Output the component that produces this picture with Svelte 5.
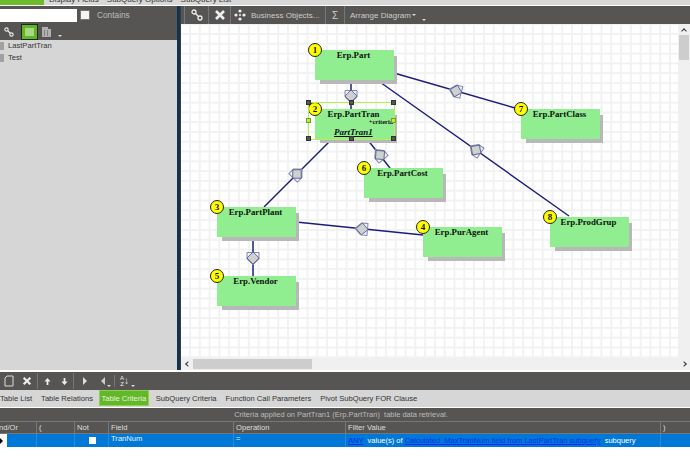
<script>
  const nodes = [
    { n: 1, name: "Erp.Part", x: 315, y: 50 },
    { n: 2, name: "Erp.PartTran", x: 315, y: 109 },
    { n: 3, name: "Erp.PartPlant", x: 217, y: 207 },
    { n: 4, name: "Erp.PurAgent", x: 423, y: 227 },
    { n: 5, name: "Erp.Vendor", x: 217, y: 276 },
    { n: 6, name: "Erp.PartCost", x: 364, y: 168 },
    { n: 7, name: "Erp.PartClass", x: 521, y: 109 },
    { n: 8, name: "Erp.ProdGrup", x: 550, y: 217 },
  ];

  // canvas starts at 181,24 so everything in here is offset from that
  const links = [
    { x1: 351, y1: 80, x2: 351, y2: 109, mx: 351, my: 96, rot: 0, thick: true },
    { x1: 394, y1: 73, x2: 515, y2: 108, mx: 456, my: 91, rot: 105 },
    { x1: 377, y1: 80, x2: 569, y2: 216, mx: 476, my: 150, rot: 125 },
    { x1: 333, y1: 138, x2: 264, y2: 207, mx: 297, my: 174, rot: 225 },
    { x1: 367, y1: 139, x2: 390, y2: 168, mx: 380, my: 155, rot: 140 },
    { x1: 296, y1: 222, x2: 423, y2: 235, mx: 362, my: 229, rot: 95 },
    { x1: 253, y1: 236, x2: 253, y2: 276, mx: 253, my: 258, rot: 0, thick: true },
  ];

  const handles = [
    { x: 308, y: 102, on: false },
    { x: 351, y: 102, on: false },
    { x: 393, y: 102, on: false },
    { x: 308, y: 120, on: true },
    { x: 393, y: 120, on: true },
    { x: 308, y: 138, on: false },
    { x: 351, y: 138, on: false },
    { x: 393, y: 138, on: false },
  ];

  const tabs = ["Table List", "Table Relations", "Table Criteria", "SubQuery Criteria", "Function Call Parameters", "Pivot SubQuery FOR Clause"];
</script>

<div class="app">
  <div class="menu">
    <div class="menu-green"></div>
    <div class="menu-text">
      <span>Display Fields</span><span>SubQuery Options</span><span>SubQuery List</span>
    </div>
  </div>

  <div class="main">
    <div class="left">
      <div class="search">
        <div class="input"></div>
        <div class="check"></div>
        <span>Contains</span>
      </div>
      <div class="left-tools">
        <svg class="ic link" viewBox="0 0 12 12"><circle cx="3" cy="3" r="2" /><circle cx="9" cy="9" r="2" /><path d="M4.5 4.5l3 3" /></svg>
        <div class="grid-btn"><div></div></div>
        <svg class="calc" viewBox="0 0 12 12"><path d="M1 1h6v2h3v8H1z" /><path class="dots" d="M3 5h1M6 5h1M3 7h1M6 7h1M3 9h1M6 9h1" /></svg>
        <span class="drop"></span>
      </div>
      <div class="list">
        <div class="item"><i></i>LastPartTran</div>
        <div class="item"><i></i>Test</div>
      </div>
    </div>

    <div class="sep"></div>

    <div class="right">
      <div class="tools">
        <div class="tool first"><svg class="ic link" viewBox="0 0 12 12"><circle cx="3" cy="3" r="2" /><circle cx="9" cy="9" r="2" /><path d="M4.5 4.5l3 3" /></svg></div>
        <div class="tool narrow"><svg class="ic x" viewBox="0 0 12 12"><path d="M2 2l8 8M10 2l-8 8" /></svg></div>
        <div class="tool bo">
          <svg class="ic move" viewBox="0 0 12 12"><circle cx="6" cy="2" r="1.6" /><circle cx="6" cy="10" r="1.6" /><circle cx="2" cy="6" r="1.6" /><circle cx="10" cy="6" r="1.6" /><circle cx="6" cy="6" r="1" /></svg>
          <span>Business Objects...</span>
        </div>
        <div class="tool sigma">Σ</div>
        <div class="tool plain">
          <span>Arrange Diagram</span><span class="drop small"></span><span class="drop"></span>
        </div>
      </div>

      <div class="canvas-wrap">
        <div class="canvas">
          <svg class="wires" width="690" height="461">
            {#each links as l}
              <line x1={l.x1} y1={l.y1} x2={l.x2} y2={l.y2} class:thick={l.thick} />
            {/each}
            {#each links as l}
              <g transform="translate({l.mx} {l.my}) rotate({l.rot})">
                <path class="cap" d="M-6 -5.5h12v6.5l-6 6l-6 -6z" />
                <path class="body" d="M0 -6l6 6l-6 6l-6 -6z" />
              </g>
            {/each}
          </svg>

          {#each nodes as node}
            <div class="node" style="left: {node.x - 181}px; top: {node.y - 24}px">
              <div class="node-name">{node.name}</div>
              {#if node.n === 2}
                <div class="crit">+criteria</div>
                <div class="alias">PartTran1</div>
              {/if}
              <div class="badge">{node.n}</div>
            </div>
          {/each}

          <div class="selection"></div>
          {#each handles as h}
            <div class="handle" class:on={h.on} style="left: {h.x - 181 - 2}px; top: {h.y - 24 - 2}px"></div>
          {/each}
        </div>
        <div class="vbar">
          <span class="arrow up"></span>
          <div class="vthumb"></div>
        </div>
        <div class="hbar">
          <span class="arrow lt"></span>
          <div class="hthumb"></div>
          <span class="arrow rt"></span>
        </div>
      </div>
    </div>
  </div>

  <div class="bottom">
    <div class="bottom-tools">
      <svg class="page" viewBox="0 0 10 12"><path d="M1 3l2 -2h6v10H1z" /></svg>
      <svg class="ic x" viewBox="0 0 12 12"><path d="M2 2l8 8M10 2l-8 8" /></svg>
      <i class="bar"></i>
      <svg class="mv" viewBox="0 0 8 8"><path d="M4 0l3.5 4H5v4H3V4H.5z" /></svg>
      <svg class="mv second" viewBox="0 0 8 8"><path d="M4 8l3.5 -4H5V0H3v4H.5z" /></svg>
      <i class="bar"></i>
      <span class="tri r"></span><span class="tri l"></span><span class="drop"></span>
      <i class="bar thin"></i>
      <span class="sort"><b>A<br />Z</b>↓</span><span class="drop"></span>
    </div>
    <div class="tabs">
      {#each tabs as t, i}
        <div class="tab" class:active={i === 2}>{t}</div>
      {/each}
    </div>
    <div class="caption">Criteria applied on PartTran1 (Erp.PartTran)&nbsp; table data retrieval.</div>
    <div class="head">
      <div class="c c1">And/Or</div>
      <div class="c c2">(</div>
      <div class="c c3">Not</div>
      <div class="c c4">Field</div>
      <div class="c c5">Operation</div>
      <div class="c c6">Filter Value</div>
      <div class="c c7">)</div>
    </div>
    <div class="row">
      <div class="c c1"><div class="sel"></div></div>
      <div class="c c2"></div>
      <div class="c c3"><div class="box"></div></div>
      <div class="c c4">TranNum</div>
      <div class="c c5">=</div>
      <div class="c c6 filter"><u>ANY</u>&nbsp; value(s) of <u>Calculated&nbsp; MaxTranNum field from LastPartTran subquery</u>&nbsp; subquery</div>
      <div class="c c7"></div>
    </div>
  </div>
</div>

<style>
  :global(body) {
    margin: 0;
    background: #fff;
  }

  .app {
    width: 690px;
    height: 461px;
    overflow: hidden;
    display: flex;
    flex-direction: column;
    font-family: "Liberation Sans", Arial, sans-serif;
    font-size: 8px;
    color: #ddd;
  }

  .menu {
    height: 5px;
    flex: none;
    display: flex;
    background: #d8d8d8;
    overflow: hidden;
    margin-bottom: 1px;
  }

  .menu-green {
    width: 44px;
    background: #6cbb2c;
  }

  .menu-text {
    display: flex;
    gap: 8px;
    margin-left: 5px;
    margin-top: -4px;
    color: #333;
    font-size: 8px;
    line-height: 8px;
    white-space: nowrap;
  }

  .main {
    height: 364px;
    flex: none;
    display: flex;
  }

  .left {
    width: 177px;
    display: flex;
    flex-direction: column;
  }

  .search {
    height: 18px;
    background: #565553;
    display: flex;
    align-items: center;
    color: #bbb;
    font-size: 8.3px;
  }

  .input {
    width: 77px;
    height: 13px;
    background: #fff;
  }

  .check {
    width: 8px;
    height: 8px;
    background: #f4f4f4;
    border: 1px solid #777;
    margin: 0 7px 0 3px;
  }

  .left-tools {
    height: 16px;
    background: #565553;
    display: flex;
    align-items: center;
    padding-left: 4px;
  }

  .left-tools .link {
    width: 10px;
    margin-right: 7px;
  }

  .grid-btn {
    width: 17px;
    height: 16px;
    box-sizing: border-box;
    border: 1px solid #222;
    background: #5fb71f;
    padding: 3px 3px;
    margin-right: 3px;
  }

  .grid-btn div {
    height: 100%;
    background: #a8d686;
  }

  .calc {
    width: 12px;
    height: 12px;
    fill: #b0b0b0;
    margin-right: 3px;
  }

  .calc .dots {
    stroke: #555;
    fill: none;
  }

  .drop {
    display: inline-block;
    width: 0;
    height: 0;
    border: 2px solid transparent;
    border-top: 2px solid #ddd;
    align-self: flex-end;
    margin: 0 0 1px 2px;
  }

  .list {
    flex: 1;
    background: #d6d6d6;
    color: #333;
    font-size: 7.6px;
  }

  .item {
    height: 12px;
    line-height: 12px;
    display: flex;
    align-items: center;
  }

  .item i {
    width: 4px;
    height: 8px;
    background: #a0a0a0;
    margin-right: 4px;
  }

  .sep {
    width: 4px;
    background: linear-gradient(90deg, #16324a 75%, #3a4f60);
  }

  .right {
    flex: 1;
    display: flex;
    flex-direction: column;
    min-width: 0;
  }

  .tools {
    height: 18px;
    flex: none;
    background: #565553;
    display: flex;
    align-items: stretch;
    color: #ccc;
    font-size: 8px;
    padding-left: 3px;
    white-space: nowrap;
  }

  .tool {
    display: flex;
    align-items: center;
    border-left: 1px solid #777;
  }

  .tool.first {
    width: 23px;
    justify-content: center;
  }

  .tool.narrow {
    width: 21px;
    justify-content: center;
  }

  .tool.bo {
    width: 95px;
    padding-left: 3px;
    box-sizing: border-box;
    gap: 5px;
  }

  .tool.sigma {
    width: 18px;
    justify-content: center;
    font-size: 10px;
  }

  .tool.plain {
    padding-left: 5px;
  }

  .tool.plain .small {
    margin-bottom: 6px;
    margin-left: 1px;
  }

  .tool.plain .drop:last-child {
    margin-left: 6px;
  }

  .ic {
    width: 12px;
    height: 12px;
    fill: none;
    stroke: #eee;
  }

  .ic.x {
    stroke-width: 2.6;
  }

  .ic.link {
    stroke-width: 1.3;
  }

  .ic.move {
    fill: #eee;
    stroke: none;
  }

  .canvas-wrap {
    flex: 1;
    display: grid;
    grid-template-columns: 497px 12px;
    grid-template-rows: 334px 12px;
    background: #f0f0f0;
  }

  .canvas {
    position: relative;
    overflow: hidden;
    background-color: #fff;
    background-image:
      linear-gradient(90deg, #f2f2f2 2px, transparent 2px),
      linear-gradient(#f2f2f2 2px, transparent 2px);
    background-size: 9.8px 9.8px;
    background-position: 8px 9px;
  }

  .wires {
    position: absolute;
    left: -181px;
    top: -24px;
  }

  .wires line {
    stroke: #1c1c7c;
    stroke-width: 1.4;
  }

  .wires line.thick {
    stroke: #4a5a9c;
    stroke-width: 2;
  }

  .cap {
    fill: #eef0f6;
    stroke: #8088b4;
    stroke-width: 1;
  }

  .body {
    fill: #d0d0d0;
    stroke: #4a5688;
    stroke-width: 0.8;
  }

  .node {
    position: absolute;
    width: 79px;
    height: 30px;
    background: #90ee90;
    box-shadow: 4px 5px 0 -1px #b8b8b8;
    color: #111;
    font-family: "Liberation Serif", "Times New Roman", serif;
  }

  .node-name {
    text-align: center;
    font-weight: bold;
    font-size: 8.8px;
    line-height: 10px;
    padding-right: 2px;
  }

  .crit {
    position: absolute;
    right: 1px;
    top: 9px;
    font-size: 6.5px;
    font-weight: bold;
    line-height: 8px;
  }

  .alias {
    position: absolute;
    left: 19px;
    top: 18px;
    font-size: 9px;
    font-weight: bold;
    font-style: italic;
    line-height: 10px;
    text-decoration: underline;
  }

  .badge {
    position: absolute;
    left: -7px;
    top: -7px;
    width: 14px;
    height: 14px;
    box-sizing: border-box;
    border: 1px solid #222;
    border-radius: 50%;
    background: #ff0;
    text-align: center;
    font-size: 9px;
    font-weight: bold;
    line-height: 12px;
  }

  .selection {
    position: absolute;
    left: 127px;
    top: 78px;
    width: 85px;
    height: 36px;
    border: 1px solid #b8ef50;
  }

  .handle {
    position: absolute;
    width: 5px;
    height: 5px;
    box-sizing: border-box;
    background: #555;
    border: 1px solid #333;
  }

  .handle.on {
    background: #b8ef30;
    border-color: #7a9a30;
  }

  .vbar {
    background: #f0f0f0;
    position: relative;
  }

  .vthumb {
    position: absolute;
    left: 1px;
    top: 11px;
    width: 10px;
    height: 25px;
    background: #cdcdcd;
  }

  .hbar {
    grid-column: 1 / 3;
    background: #f0f0f0;
    display: flex;
    align-items: center;
    position: relative;
  }

  .hthumb {
    width: 119px;
    height: 10px;
    margin-left: 3px;
    background: #cdcdcd;
  }

  .arrow {
    display: block;
    width: 3px;
    height: 3px;
    border-left: 1.5px solid #333;
    border-top: 1.5px solid #333;
  }

  .arrow.up {
    transform: rotate(45deg);
    margin: 5px 0 0 4px;
  }

  .arrow.lt {
    transform: rotate(-45deg);
    margin-left: 5px;
  }

  .arrow.rt {
    transform: rotate(135deg);
    margin-left: auto;
    margin-right: 4px;
  }

  .bottom {
    flex: 1;
    display: flex;
    flex-direction: column;
    padding-top: 2px;
  }

  .bottom-tools {
    height: 18px;
    flex: none;
    background: #565553;
    display: flex;
    align-items: center;
    padding-left: 4px;
    color: #eee;
  }

  .bottom-tools .ic.x {
    width: 10px;
    height: 10px;
  }

  .page {
    width: 10px;
    height: 12px;
    fill: none;
    stroke: #ddd;
    margin-right: 8px;
  }

  .bar {
    width: 1px;
    height: 16px;
    background: #777;
    margin: 0 6px 0 5px;
  }

  .bar.thin {
    margin: 0 5px 0 3px;
    height: 12px;
  }

  .mv {
    width: 7px;
    height: 7px;
    fill: #eee;
  }

  .mv.second {
    margin-left: 10px;
  }

  .tri {
    width: 0;
    height: 0;
    border: 4px solid transparent;
  }

  .tri.r {
    border-left: 4px solid #ddd;
    border-right: 0;
    margin: 0 14px 0 3px;
  }

  .tri.l {
    border-right: 4px solid #ccc;
    border-left: 0;
  }

  .sort {
    display: flex;
    align-items: center;
    font-size: 10px;
    line-height: 6px;
  }

  .sort b {
    font-size: 6px;
    font-weight: normal;
    text-align: center;
  }

  .tabs {
    height: 17px;
    flex: none;
    background: #d6d6d6;
    display: flex;
    color: #333;
    font-size: 7.6px;
    line-height: 17px;
  }

  .tab {
    padding: 0 4.5px;
    white-space: nowrap;
  }

  .tab:first-child {
    padding-left: 0;
  }

  .tab.active {
    background: #62b82a;
    color: #e6f3dc;
    box-sizing: border-box;
    height: 16px;
    line-height: 15px;
    border: 1px solid #8dd04f;
    padding: 0 2px;
    margin: 0 2px 0 1px;
  }

  .caption {
    height: 13px;
    flex: none;
    background: #565553;
    color: #bbb;
    text-align: center;
    font-size: 7.5px;
    line-height: 13px;
    padding-right: 8px;
    border-top: 1px solid #fff;
  }

  .head,
  .row {
    display: flex;
    flex: none;
    height: 13px;
  }

  .head {
    background: #565553;
    color: #ddd;
    border-top: 1px solid #777;
    border-bottom: 1px solid #777;
    box-sizing: border-box;
  }

  .row {
    background: #0078d7;
    color: #e8f2fb;
  }

  .c {
    font-size: 7.6px;
    line-height: 11px;
    padding-left: 2px;
    box-sizing: border-box;
    white-space: nowrap;
    overflow: hidden;
    border-right: 1px solid #777;
  }

  .row .c {
    border-right-color: #2a8ad6;
    line-height: 10px;
  }

  .c1 {
    width: 37px;
    text-indent: -8px;
  }

  .row .c1 {
    padding: 0;
    text-indent: 0;
  }

  .c2 {
    width: 38px;
  }

  .c3 {
    width: 34px;
  }

  .c4 {
    width: 125px;
  }

  .c5 {
    width: 112px;
  }

  .c6 {
    width: 315px;
  }

  .c7 {
    flex: 1;
    border-right: 0;
  }

  .sel {
    width: 7px;
    height: 13px;
    background: #fff;
    position: relative;
  }

  .sel::after {
    content: "";
    position: absolute;
    top: 4px;
    left: 0;
    border: 3px solid transparent;
    border-left: 3px solid #000;
    border-right: 0;
  }

  .box {
    width: 7px;
    height: 7px;
    background: #fff;
    margin: 3px 0 0 12px;
  }

  .row .filter {
    color: #fff;
    font-size: 7.5px;
    line-height: 14px;
  }

  .filter u {
    color: #0a2cf0;
  }
</style>
